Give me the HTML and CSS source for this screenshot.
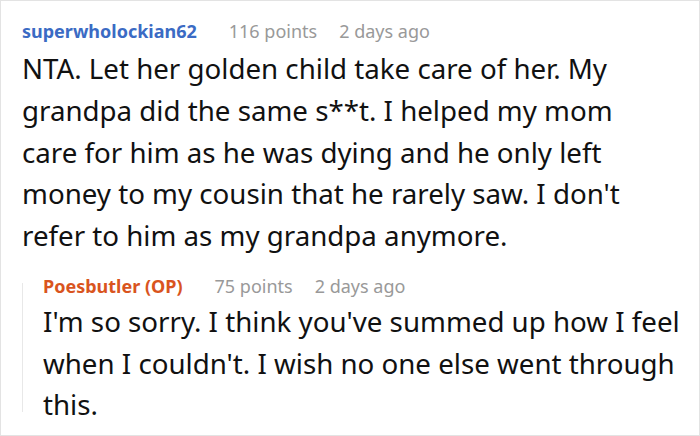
FILE: index.html
```html
<!DOCTYPE html>
<html>
<head>
<meta charset="utf-8">
<link rel="stylesheet" href="styles.css">
</head>
<body>
<div class="thread">
  <div class="comment">
    <div class="meta">
      <span class="user">superwholockian62</span>
      <span class="points">116 points</span>
      <span class="time">2 days ago</span>
    </div>
    <p class="text">NTA. Let her golden child take care of her. My<br>grandpa did the same s**t. I helped my mom<br>care for him as he was dying and he only left<br>money to my cousin that he rarely saw. I don't<br>refer to him as my grandpa anymore.</p>
    <div class="reply">
      <div class="meta">
        <span class="user op">Poesbutler (OP)</span>
        <span class="points">75 points</span>
        <span class="time">2 days ago</span>
      </div>
      <p class="text">I'm so sorry. I think you've summed up how I feel<br>when I couldn't. I wish no one else went through<br>this.</p>
    </div>
  </div>
</div>
</body>
</html>
```
FILE: styles.css
```css
html, body {
  margin: 0;
  padding: 0;
  background: #fff;
}
.thread {
  width: 700px;
  height: 436px;
  box-sizing: border-box;
  border: 1px solid #e3e3e3;
  padding: 18px 0 0 21px;
  font-family: "Noto Sans", "Open Sans", sans-serif;
  overflow: hidden;
}
.meta {
  display: flex;
  align-items: baseline;
  font-size: 18px;
  line-height: 24px;
  color: #999;
}
.user {
  font-weight: 700;
  color: #3b6bc4;
  margin-right: 32px;
}
.user.op {
  color: #d9541e;
}
.points {
  margin-right: 22px;
}
.text {
  margin: 0;
  font-size: 27.7px;
  line-height: 41.75px;
  color: #111;
  white-space: nowrap;
}
.comment > .text {
  margin-top: 5px;
}
.reply {
  position: relative;
  margin-top: 17px;
  padding-left: 21px;
}
.reply::before {
  content: "";
  position: absolute;
  left: 0;
  top: 9px;
  bottom: 14px;
  border-left: 1px solid #e8e8e8;
}
.reply > .text {
  margin-top: 3px;
}
```
